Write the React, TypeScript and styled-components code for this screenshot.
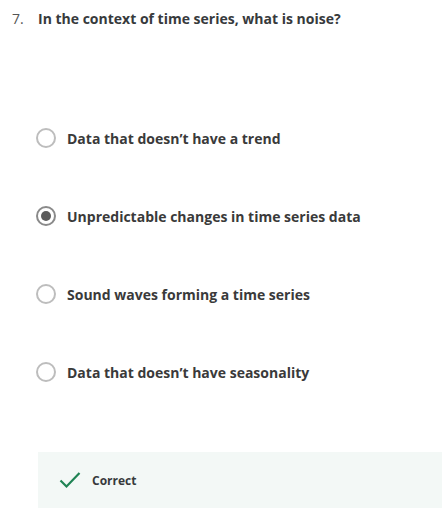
import React from 'react'
import styled, { createGlobalStyle } from 'styled-components'

const GlobalStyle = createGlobalStyle`
    body {
        margin: 0;
        background: #fff;
        font-family: "Open Sans", "Noto Sans", sans-serif;
        color: #333;
    }
`

const Page = styled.div`
    width: 442px;
    height: 524px;
    overflow: hidden;
`

const QuestionRow = styled.div`
    display: flex;
    padding: 9px 0 0 12px;
    font-size: 14px;
    line-height: 20px;
`

const QuestionNumber = styled.span`
    width: 26px;
    color: #555;
`

const QuestionText = styled.span`
    font-weight: 700;
    color: #373a3c;
`

const Options = styled.div`
    display: flex;
    flex-direction: column;
    gap: 58px;
    padding: 99px 0 0 36px;
`

const Option = styled.label`
    display: flex;
    align-items: center;
    gap: 11px;
    height: 20px;
    font-size: 14px;
    font-weight: 700;
    color: #3a3a3a;
`

const Radio = styled.span<{ $checked?: boolean }>`
    box-sizing: border-box;
    width: 20px;
    height: 20px;
    border-radius: 50%;
    border: ${p => p.$checked ? '2px solid #8a8a8a' : '2px solid #bdbdbd'};
    display: flex;
    align-items: center;
    justify-content: center;

    &::after {
        content: '';
        display: ${p => p.$checked ? 'block' : 'none'};
        width: 10px;
        height: 10px;
        border-radius: 50%;
        background: #5c5c5c;
    }
`

const Feedback = styled.div`
    display: flex;
    align-items: center;
    gap: 11px;
    margin: 70px 0 0 38px;
    height: 56px;
    padding-left: 21px;
    background: #f3f8f6;
    font-size: 12px;
    font-weight: 700;
    color: #373a3c;
`

const options = [
    { text: 'Data that doesn’t have a trend', checked: false },
    { text: 'Unpredictable changes in time series data', checked: true },
    { text: 'Sound waves forming a time series', checked: false },
    { text: 'Data that doesn’t have seasonality', checked: false },
]

const App = () => {
    return (
        <Page>
            <GlobalStyle />
            <QuestionRow>
                <QuestionNumber>7.</QuestionNumber>
                <QuestionText>In the context of time series, what is noise?</QuestionText>
            </QuestionRow>
            <Options>
                {options.map((o, i) => (
                    <Option key={i}>
                        <Radio $checked={o.checked} />
                        {o.text}
                    </Option>
                ))}
            </Options>
            <Feedback>
                <svg width="22" height="18" viewBox="0 0 22 18">
                    <path d="M1.5 9.5 L7.5 15.5 L20.5 2" fill="none" stroke="#1f8354" strokeWidth="2.2" />
                </svg>
                Correct
            </Feedback>
        </Page>
    )
}

export default App
